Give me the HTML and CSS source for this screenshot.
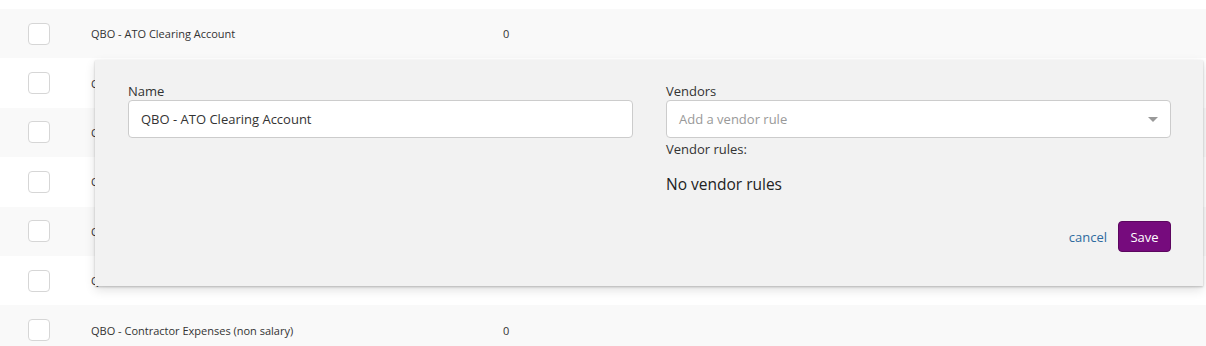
FILE: index.html
```html
<!DOCTYPE html>
<html>
<head>
<meta charset="utf-8">
<link rel="stylesheet" href="styles.css">
</head>
<body>
<div class="list">
  <div class="row alt"><span class="cb"></span><span class="name">QBO - ATO Clearing Account</span><span class="count">0</span></div>
  <div class="row"><span class="cb"></span><span class="name">QBO - ATO Integrated Client Account</span><span class="count">0</span></div>
  <div class="row alt"><span class="cb"></span><span class="name">QBO - Accounting Fees</span><span class="count">0</span></div>
  <div class="row"><span class="cb"></span><span class="name">QBO - Advertising</span><span class="count">0</span></div>
  <div class="row alt"><span class="cb"></span><span class="name">QBO - Computer Equipment</span><span class="count">0</span></div>
  <div class="row"><span class="cb"></span><span class="name">QBO - Bank Fees</span><span class="count">0</span></div>
  <div class="row alt"><span class="cb"></span><span class="name">QBO - Contractor Expenses (non salary)</span><span class="count">0</span></div>
</div>

<div class="editor">
  <div class="fields">
    <div class="field">
      <label class="label">Name</label>
      <div class="input">QBO - ATO Clearing Account</div>
    </div>
    <div class="field">
      <label class="label">Vendors</label>
      <div class="input select"><span class="placeholder">Add a vendor rule</span><span class="caret"></span></div>
      <div class="sub">Vendor rules:</div>
      <div class="empty">No vendor rules</div>
    </div>
  </div>
  <div class="actions">
    <a class="cancel">cancel</a>
    <button class="save">Save</button>
  </div>
</div>
</body>
</html>
```

FILE: styles.css
```css
* { box-sizing: border-box; }
html, body { margin: 0; padding: 0; background: #fff; }
body {
  font-family: "Open Sans", "Liberation Sans", sans-serif;
  color: #333;
  width: 1206px;
  height: 346px;
  overflow: hidden;
  position: relative;
}
.list { padding-top: 9px; }
.row {
  height: 49.4px;
  display: flex;
  align-items: center;
  background: #fff;
  font-size: 11px;
  color: #333;
}
.row.alt { background: #f9f9f9; }
.cb {
  width: 22px;
  height: 22px;
  margin-left: 28px;
  border: 1px solid #d6d6d6;
  border-radius: 4px;
  background: #fff;
  flex: none;
}
.name { margin-left: 41px; width: 414px; flex: none; white-space: nowrap; }
.count { flex: none; margin-left: -2px; }

.editor {
  position: absolute;
  left: 95px;
  top: 60px;
  width: 1108px;
  height: 226px;
  background: #f2f2f2;
  box-shadow: 0 1px 2px rgba(0,0,0,0.22), 0 4px 10px rgba(0,0,0,0.12);
  padding: 22px 32px 34px 33px;
  display: flex;
  flex-direction: column;
}
.fields { display: flex; gap: 33px; }
.field { width: 505px; display: flex; flex-direction: column; }
.label { font-size: 13px; line-height: 18px; color: #333; }
.input {
  height: 38px;
  background: #fff;
  border: 1px solid #ccc;
  border-radius: 4px;
  padding: 0 12px;
  display: flex;
  align-items: center;
  font-size: 13px;
  color: #333;
}
.select { justify-content: space-between; }
.placeholder { color: #999; }
.caret {
  width: 0; height: 0;
  border-left: 5px solid transparent;
  border-right: 5px solid transparent;
  border-top: 5px solid #999;
}
.sub { font-size: 13px; line-height: 18px; margin-top: 2px; color: #333; }
.empty { font-size: 15.5px; line-height: 22px; margin-top: 15px; color: #222; font-weight: 500; }
.actions {
  margin-top: auto;
  display: flex;
  justify-content: flex-end;
  align-items: center;
  gap: 11px;
}
.cancel { color: #2e6a9e; font-size: 13px; cursor: pointer; }
.save {
  width: 53px;
  height: 31px;
  background: #760b7d;
  color: #fff;
  border: 1px solid #5c065f;
  border-radius: 4px;
  font-family: "Open Sans", "Liberation Sans", sans-serif;
  font-size: 13px;
  padding: 0;
}
```
